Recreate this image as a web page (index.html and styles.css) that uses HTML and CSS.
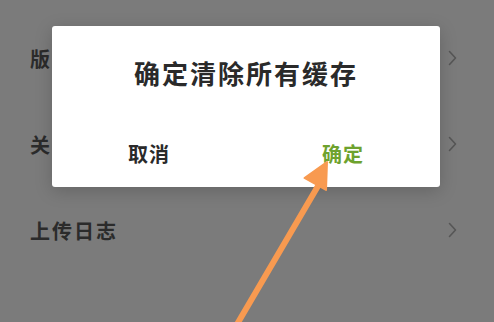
FILE: index.html
```html
<!DOCTYPE html>
<html lang="zh">
<head>
<meta charset="utf-8">
<link rel="stylesheet" href="styles.css">
</head>
<body>
<ul class="list">
  <li class="row"><span class="label">版本信息</span><svg class="chev" width="9" height="16" viewBox="0 0 9 16"><polyline points="1.5,1.5 7.5,8 1.5,14.5"/></svg></li>
  <li class="row"><span class="label">关于我们</span><svg class="chev" width="9" height="16" viewBox="0 0 9 16"><polyline points="1.5,1.5 7.5,8 1.5,14.5"/></svg></li>
  <li class="row"><span class="label">上传日志</span><svg class="chev" width="9" height="16" viewBox="0 0 9 16"><polyline points="1.5,1.5 7.5,8 1.5,14.5"/></svg></li>
</ul>
<div class="dialog">
  <div class="title">确定清除所有缓存</div>
  <div class="actions">
    <span class="btn cancel">取消</span>
    <span class="btn ok">确定</span>
  </div>
</div>
<svg class="arrow" width="494" height="322" viewBox="0 0 494 322">
  <line x1="236" y1="326" x2="318" y2="186" />
  <polygon points="327,162 304.5,178 326,190" />
</svg>
</body>
</html>
```
FILE: styles.css
```css
html, body {
  margin: 0;
  padding: 0;
  width: 494px;
  height: 322px;
  overflow: hidden;
  background: #7b7b7b;
  font-family: "Noto Sans CJK SC", "Noto Sans", sans-serif;
}
.list {
  list-style: none;
  margin: 0;
  padding: 15px 0 0 0;
}
.row {
  height: 86px;
  display: flex;
  align-items: center;
  justify-content: space-between;
  padding: 0 37px 0 30px;
}
.label {
  font-size: 20px;
  font-weight: 700;
  letter-spacing: 2px;
  color: #2b2b2b;
}
.chev polyline {
  fill: none;
  stroke: #565656;
  stroke-width: 1.6;
  stroke-linecap: round;
  stroke-linejoin: round;
}
.dialog {
  position: absolute;
  left: 52px;
  top: 26px;
  width: 388px;
  height: 161px;
  box-sizing: border-box;
  background: #fff;
  border-radius: 3px;
  box-shadow: 0 4px 18px rgba(0,0,0,0.18);
  padding-top: 32px;
  display: flex;
  flex-direction: column;
}
.title {
  text-align: center;
  font-size: 26px;
  line-height: 30px;
  font-weight: 700;
  letter-spacing: 2px;
  color: #2a2a2a;
}
.actions {
  margin-top: 54px;
  display: flex;
}
.btn {
  flex: 1;
  text-align: center;
  font-size: 20px;
  line-height: 24px;
  font-weight: 700;
  letter-spacing: 1px;
}
.cancel { color: #2a2a2a; }
.ok { color: #6ea22e; }
.arrow {
  position: absolute;
  left: 0;
  top: 0;
}
.arrow line {
  stroke: #f89a50;
  stroke-width: 6;
  stroke-linecap: round;
}
.arrow polygon {
  fill: #f89a50;
  stroke: #f89a50;
  stroke-width: 2;
  stroke-linejoin: round;
}
```
